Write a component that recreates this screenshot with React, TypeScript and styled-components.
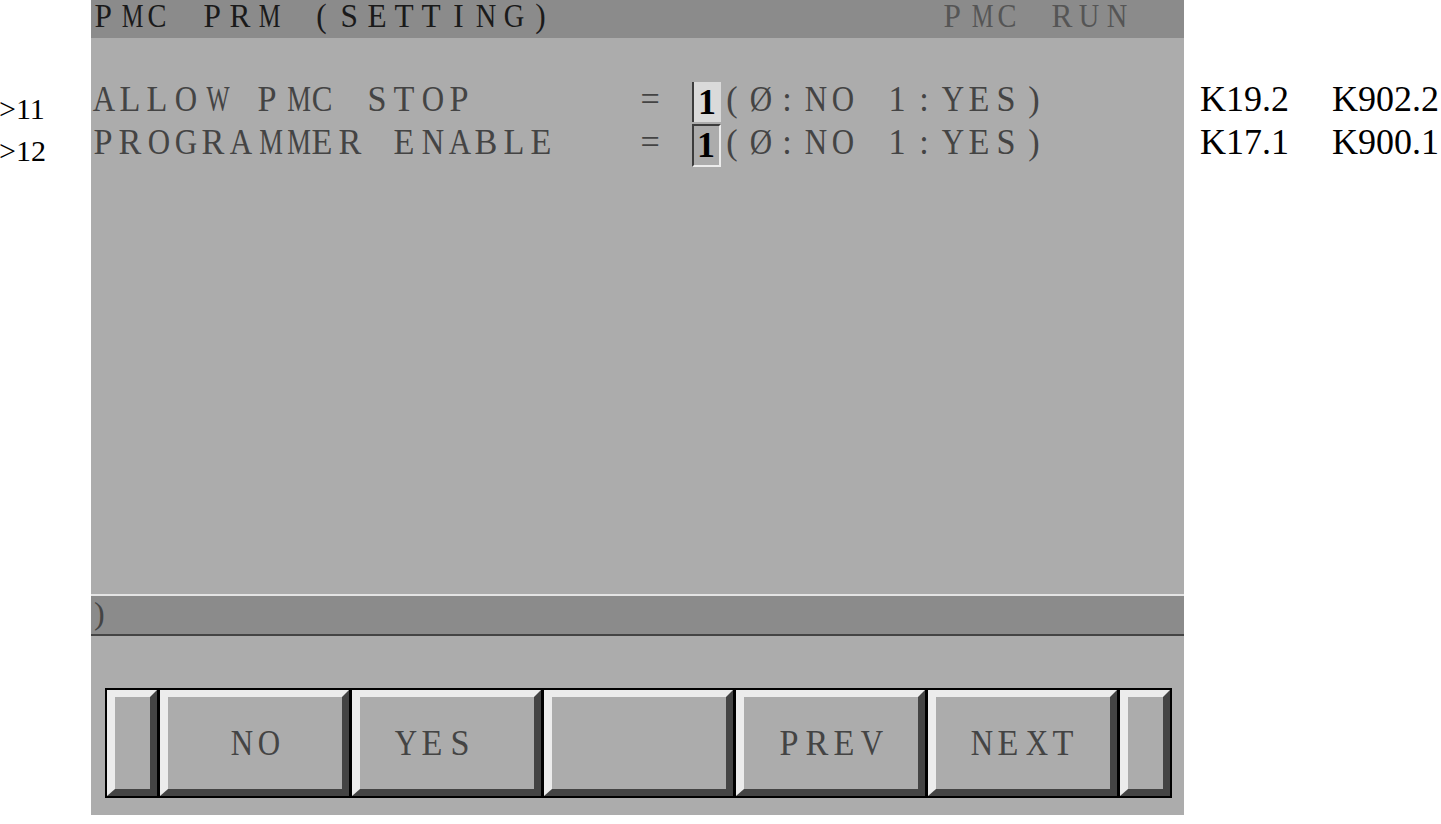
import React from "react";
import styled, { createGlobalStyle } from "styled-components";

const PITCH = 27.4;
const SERIF = `"Liberation Serif", "Times New Roman", serif`;

const Global = createGlobalStyle`
  html, body { margin: 0; padding: 0; background: #ffffff; }
  body { width: 1441px; height: 824px; overflow: hidden; }
`;

const Page = styled.div`
  display: grid;
  grid-template-columns: 91px 1093px 1fr;
  height: 824px;
`;

const SideNotes = styled.div<{ $top: number; $pad?: number }>`
  padding-top: ${(p) => p.$top}px;
  padding-left: ${(p) => p.$pad ?? 0}px;
  display: flex;
  flex-direction: column;
`;

const LineNo = styled.div`
  font-family: ${SERIF};
  font-size: 30px;
  line-height: 42px;
  height: 42px;
  color: #000;
  margin-left: -1px;
  white-space: pre;
`;

const KRow = styled.div`
  display: grid;
  grid-template-columns: 132px auto;
  font-family: ${SERIF};
  font-size: 36px;
  line-height: 43px;
  height: 43px;
  color: #000;
`;

/* fixed-pitch character cells, like the CNC's character generator */
const Cell = styled.span`
  box-sizing: border-box;
  display: inline-block;
  width: ${PITCH}px;
  padding-right: 4px;
  text-align: center;
  white-space: pre;
`;

const Ink = styled.span<{ $scale: number }>`
  display: inline-block;
  transform: scaleX(${(p) => p.$scale});
`;

const squeeze = (c: string) => {
  if (c === "M") return 0.74;
  if (c === "W") return 0.68;
  if ("ADGNOVXYØCHKQU".includes(c)) return 0.86;
  return 0.95;
};

const Chars = ({ text }: { text: string }) => (
  <>
    {Array.from(text).map((c, i) => (
      <Cell key={i}>
        <Ink $scale={squeeze(c)}>{c}</Ink>
      </Cell>
    ))}
  </>
);

const Screen = styled.div`
  height: 815px;
  background: #acacac;
  display: flex;
  flex-direction: column;
`;

const Header = styled.div`
  height: 38px;
  background: #8b8b8b;
  display: grid;
  grid-template-columns: ${31 * PITCH}px auto;
  font-family: ${SERIF};
  font-size: 33px;
  line-height: 33px;
`;

const HeaderText = styled.span<{ $tone: string }>`
  color: ${(p) => p.$tone};
  display: flex;
`;

const Params = styled.div`
  flex: 1;
  padding-top: 43px;
  display: flex;
  flex-direction: column;
`;

const ParamRow = styled.div`
  display: flex;
  height: 43px;
  font-family: ${SERIF};
  font-size: 36px;
  line-height: 37px;
  color: #444444;
`;

const Segment = styled.span`
  display: flex;
`;

const ValueBox = styled.span<{ $active: boolean }>`
  box-sizing: border-box;
  width: 29px;
  margin-left: -2px;
  display: flex;
  align-items: center;
  justify-content: center;
  color: #000;
  font-weight: bold;
  border-left: 2px solid #3c3c3c;
  ${(p) =>
    p.$active
      ? `background: #dadada; margin-top: 1px; margin-bottom: 2px;`
      : `border-top: 2px solid #3c3c3c; border-right: 2px solid #ececec; border-bottom: 2px solid #ececec;`}
`;

const InputLine = styled.div`
  box-sizing: border-box;
  height: 42px;
  background: #8b8b8b;
  border-top: 2px solid #e4e4e4;
  border-bottom: 2px solid #444;
  font-family: ${SERIF};
  font-size: 32px;
  line-height: 34px;
  color: #444;
  padding-left: 3px;
`;

const SoftArea = styled.div`
  padding: 52px 12px 17px 14px;
`;

const KeyBar = styled.div`
  display: grid;
  grid-template-columns: 50px repeat(5, 1fr) 50px;
  gap: 3px;
  height: 110px;
  box-sizing: border-box;
  background: #000;
  border: 2px solid #000;
`;

const Key = styled.div`
  box-sizing: border-box;
  background: #acacac;
  border-top: 7px solid #ececec;
  border-left: 8px solid #ececec;
  border-right: 7px solid #444;
  border-bottom: 7px solid #444;
  display: flex;
  align-items: center;
  justify-content: center;
  font-family: ${SERIF};
  font-size: 36px;
  line-height: 40px;
  color: #444444;
`;

const KeyLabel = styled.span`
  display: flex;
  padding-left: 2px;
`;

const params = [
  { label: "ALLOW PMC STOP      = ", value: "1", active: true },
  { label: "PROGRAMMER ENABLE   = ", value: "1", active: false },
];

const keys = ["", "NO", "YES ", "", "PREV", "NEXT", ""];

export default function App() {
  return (
    <>
      <Global />
      <Page>
        <SideNotes $top={88}>
          <LineNo>{">11"}</LineNo>
          <LineNo>{">12"}</LineNo>
        </SideNotes>
        <Screen>
          <Header>
            <HeaderText $tone="#1a1a1a">
              <Chars text="PMC PRM (SETTING)" />
            </HeaderText>
            <HeaderText $tone="#555555">
              <Chars text="PMC RUN" />
            </HeaderText>
          </Header>
          <Params>
            {params.map((p) => (
              <ParamRow key={p.label}>
                <Segment>
                  <Chars text={p.label} />
                </Segment>
                <ValueBox $active={p.active}>{p.value}</ValueBox>
                <Segment>
                  <Chars text="(Ø:NO 1:YES)" />
                </Segment>
              </ParamRow>
            ))}
          </Params>
          <InputLine>)</InputLine>
          <SoftArea>
            <KeyBar>
              {keys.map((k, i) => (
                <Key key={i}>
                  {k && (
                    <KeyLabel>
                      <Chars text={k} />
                    </KeyLabel>
                  )}
                </Key>
              ))}
            </KeyBar>
          </SoftArea>
        </Screen>
        <SideNotes $top={78} $pad={16}>
          <KRow>
            <span>K19.2</span>
            <span>K902.2</span>
          </KRow>
          <KRow>
            <span>K17.1</span>
            <span>K900.1</span>
          </KRow>
        </SideNotes>
      </Page>
    </>
  );
}
